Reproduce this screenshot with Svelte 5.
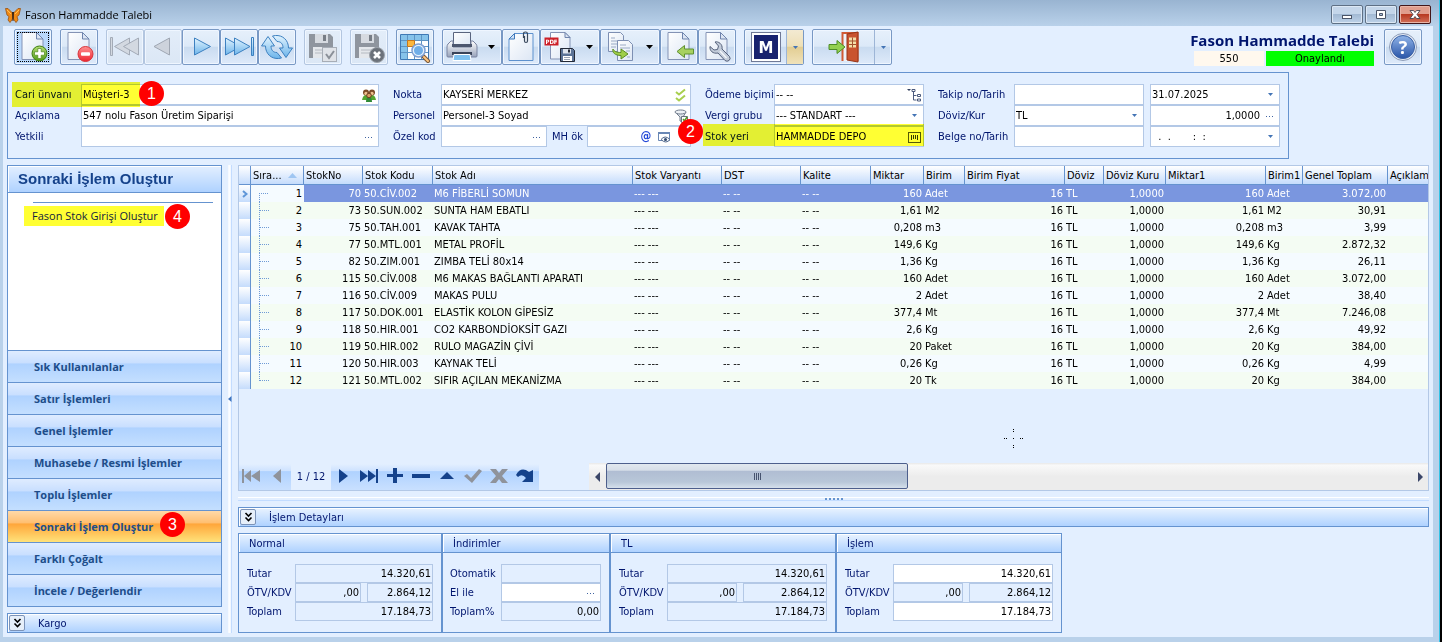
<script>
  const groups = [
    [{ icon: 'new', label: 'Yeni', focused: true }],
    [{ icon: 'delete', label: 'Sil' }],
    [
      { icon: 'first', label: 'İlk kayıt', disabled: true },
      { icon: 'prev', label: 'Önceki kayıt', disabled: true },
      { icon: 'next', label: 'Sonraki kayıt' },
      { icon: 'last', label: 'Son kayıt' },
      { icon: 'refresh', label: 'Yenile' }
    ],
    [{ icon: 'save', label: 'Kaydet', disabled: true }],
    [{ icon: 'cancel', label: 'Vazgeç', disabled: true }],
    [{ icon: 'search', label: 'Listele' }],
    [
      { icon: 'print', label: 'Yazdır', caret: true },
      { icon: 'note', label: 'Ekler' },
      { icon: 'pdf', label: 'PDF kaydet', caret: true },
      { icon: 'copy', label: 'Kopyala', caret: true },
      { icon: 'import', label: 'İçeri al' },
      { icon: 'tools', label: 'Ayarlar' }
    ],
    [{ icon: 'm', label: 'Modül', split: 'gold' }],
    [{ icon: 'exit', label: 'Çıkış', split: 'plain' }]
  ]

  const menu = [
    'Sık Kullanılanlar',
    'Satır İşlemleri',
    'Genel İşlemler',
    'Muhasebe / Resmi İşlemler',
    'Toplu İşlemler',
    'Sonraki İşlem Oluştur',
    'Farklı Çoğalt',
    'İncele / Değerlendir'
  ]

  const columns = [
    { title: 'Sıra...', cls: 'c-order', num: true },
    { title: 'StokNo', cls: 'c-no', num: true },
    { title: 'Stok Kodu', cls: 'c-code' },
    { title: 'Stok Adı', cls: 'c-name' },
    { title: 'Stok Varyantı', cls: 'c-variant' },
    { title: 'DST', cls: 'c-dst' },
    { title: 'Kalite', cls: 'c-quality' },
    { title: 'Miktar', cls: 'c-qty', num: true },
    { title: 'Birim', cls: 'c-unit' },
    { title: 'Birim Fiyat', cls: 'c-price', num: true },
    { title: 'Döviz', cls: 'c-cur' },
    { title: 'Döviz Kuru', cls: 'c-rate', num: true },
    { title: 'Miktar1', cls: 'c-price', num: true },
    { title: 'Birim1', cls: 'c-unit1' },
    { title: 'Genel Toplam', cls: 'c-total', num: true },
    { title: 'Açıklama', cls: '' }
  ]

  const items = [
    [70, '50.CİV.002', 'M6 FİBERLİ SOMUN', '160', 'Adet', 'Adet', '3.072,00'],
    [73, '50.SUN.002', 'SUNTA HAM EBATLI', '1,61', 'M2', 'M2', '30,91'],
    [75, '50.TAH.001', 'KAVAK TAHTA', '0,208', 'm3', 'm3', '3,99'],
    [77, '50.MTL.001', 'METAL PROFİL', '149,6', 'Kg', 'Kg', '2.872,32'],
    [82, '50.ZIM.001', 'ZIMBA TELİ 80x14', '1,36', 'Kg', 'Kg', '26,11'],
    [115, '50.CİV.008', 'M6 MAKAS BAĞLANTI APARATI', '160', 'Adet', 'Adet', '3.072,00'],
    [116, '50.CİV.009', 'MAKAS PULU', '2', 'Adet', 'Adet', '38,40'],
    [117, '50.DOK.001', 'ELASTİK KOLON GİPESİZ', '377,4', 'Mt', 'Mt', '7.246,08'],
    [118, '50.HIR.001', 'CO2 KARBONDİOKSİT GAZI', '2,6', 'Kg', 'Kg', '49,92'],
    [119, '50.HIR.002', 'RULO MAGAZİN ÇİVİ', '20', 'Paket', 'Kg', '384,00'],
    [120, '50.HIR.003', 'KAYNAK TELİ', '0,26', 'Kg', 'Kg', '4,99'],
    [121, '50.MTL.002', 'SIFIR AÇILAN MEKANİZMA', '20', 'Tk', 'Kg', '384,00']
  ]

  const rows = items.map(([no, code, name, qty, unit, unit1, total], i) => [
    i + 1, no, code, name, '--- ---', '-- --', '-- --', qty, unit, '16', 'TL', '1,0000', qty, unit1, total, ''
  ])

  const totals = [
    { id: 'normal', title: 'Normal' },
    { id: 'discount', title: 'İndirimler' },
    { id: 'tl', title: 'TL' },
    { id: 'process', title: 'İşlem', editable: true }
  ]

  const navigator = [
    { icon: 'first', label: 'İlk', off: true },
    { icon: 'prev', label: 'Önceki', off: true },
    { icon: 'count' },
    { icon: 'next', label: 'Sonraki' },
    { icon: 'last', label: 'Son' },
    { icon: 'add', label: 'Ekle' },
    { icon: 'remove', label: 'Çıkar' },
    { icon: 'edit', label: 'Düzenle' },
    { icon: 'post', label: 'Onayla', off: true },
    { icon: 'cancel', label: 'İptal', off: true },
    { icon: 'refresh', label: 'Tazele' }
  ]

  let activeMenu = 5
  let selected = 0
</script>

{#snippet page()}
  <path d="M5 1.500h14.500l6.500 6.500v20.500h-21z" fill="url(#paper)" stroke="#8493b5" />
  <path d="M19.500 1.500v6.500h6.500z" fill="#dce5f3" stroke="#6f84ad" />
{/snippet}

{#snippet floppy()}
  <path d="M2 3h21l3 3v21h-24z" fill="#8f959e" />
  <path d="M8 3h13v9h-13z" fill="#d6dae0" />
  <path d="M16 4h3v6h-3z" fill="#777d86" />
  <path d="M6 16h16v11h-16z" fill="#e4e7eb" />
  <path d="M8 19h12M8 22h12" stroke="#b5bac1" />
{/snippet}

{#snippet toolIcon(name)}
  <svg class="tool-icon" viewBox="0 0 32 32" aria-hidden="true">
    {#if name === 'new'}
      {@render page()}
      <circle cx="22.500" cy="22.500" r="7.500" fill="url(#green)" stroke="#3d7d12" />
      <path d="M20.800 17.500h3.400v3.300h3.300v3.400h-3.300v3.300h-3.400v-3.300h-3.300v-3.400h3.300z" fill="#fff" stroke="#4f8a1d" stroke-width=".7" />
    {:else if name === 'delete'}
      {@render page()}
      <circle cx="22.500" cy="23" r="7.500" fill="url(#red)" stroke="#d8343a" />
      <rect x="18" y="21.300" width="9" height="3.400" rx="1" fill="#fff" />
    {:else if name === 'first'}
      <g fill="#d3d9e1" stroke="#a3abb7">
        <path d="M1.500 6.500h2v18h-2z" />
        <path d="M20.500 7v17l-15-8.500z" />
        <path d="M29.500 7v17l-15-8.500z" />
      </g>
    {:else if name === 'prev'}
      <path d="M22.500 7v17l-15.500-8.500z" fill="#cdd3dc" stroke="#9fa7b3" />
    {:else if name === 'next'}
      <path d="M9.500 7v17l16-8.500z" fill="url(#sky)" stroke="#3c80c0" />
    {:else if name === 'last'}
      <g fill="url(#sky)" stroke="#3c80c0">
        <path d="M2.500 7v17l15.500-8.500z" />
        <path d="M11.500 7v17l15.500-8.500z" />
        <path d="M28.500 6.500h2v18h-2z" />
      </g>
    {:else if name === 'refresh'}
      <g fill="url(#sky)" stroke="#3c80c0" stroke-linejoin="round">
        <path d="M4.500 15c0 8 6 13 13 12.500l3-.5-4.500-5.500c-4 0-6-2.500-6-6.500h3.500l-6.500-9.500-6.500 9.500z" />
        <path d="M27.500 17c0-8-6-13-13-12.500l-3 .5 4.500 5.500c4 0 6 2.500 6 6.500h-3.500l6.500 9.500 6.500-9.500z" />
      </g>
    {:else if name === 'save'}
      {@render floppy()}
      <rect x="15.500" y="16.500" width="14" height="14" fill="#e0e3e8" stroke="#a7adb6" />
      <path d="M19 23l3 4 5-7" fill="none" stroke="#8b9098" stroke-width="2" />
    {:else if name === 'cancel'}
      {@render floppy()}
      <circle cx="24" cy="24" r="7.500" fill="#6c727a" stroke="#9ca2aa" />
      <path d="M21 21l6 6m0-6l-6 6" stroke="#fff" stroke-width="2.600" />
    {:else if name === 'search'}
      <path d="M1.500 3.500h28v25h-28z" fill="#fff" stroke="#3f79b5" />
      <path d="M2 4h27v5h-27zM2 9h6v19h-6z" fill="#86c3ea" />
      <path d="M2 9.500h27M2 15.500h27M2 21.500h27M8.500 4v24M15.500 4v24M22.500 4v24" stroke="#5e94c4" fill="none" />
      <path d="M8.500 9.500h7v6h-7z" fill="#fdb73e" stroke="#c9781c" />
      <path d="M24 25l5 5" stroke="#7b5a3a" stroke-width="4" stroke-linecap="round" />
      <path d="M25 26l4 4" stroke="#ffc680" stroke-width="2" stroke-linecap="round" />
      <circle cx="19.500" cy="19.500" r="6.500" fill="#e4f2fd" stroke="#7f9fd2" stroke-width="1.500" />
      <circle cx="19.500" cy="19.500" r="4.500" fill="#70aee8" />
    {:else if name === 'print'}
      <path d="M7.500 1.500h17v13h-17z" fill="url(#paper)" stroke="#59647e" />
      <path d="M2 13l3-3h2v6h18v-6h2l3 3q1 1 1 3v9q0 1-1 1h-28q-1 0-1-1v-9q0-2 1-3z" fill="url(#steel)" stroke="#7983a0" />
      <path d="M6 13h20v3h-20z" fill="#4c566e" />
      <path d="M6 21h20v3h-20z" fill="#3a445a" />
      <path d="M8 23.500h16l1 6h-18z" fill="#7fc1f0" stroke="#fff" />
    {:else if name === 'note'}
      <path d="M9.500 2.500h18.500v27h-24v-21.500z" fill="url(#paper)" stroke="#5d91ce" />
      <path d="M9.500 2.500v5.500h-5.500z" fill="#cfe1f6" stroke="#3f78bb" />
      <path d="M18.500 7v-4q0-2 2-2t2 2v7q0 1.500-1.500 1.500t-1.500-1.500v-5" fill="none" stroke="#39485c" stroke-width="1.200" />
    {:else if name === 'pdf'}
      <path d="M6.500 1.500h14.500l5 5v21.500h-19.500z" fill="url(#paper)" stroke="#8493b5" />
      <path d="M21 1.500v5h5z" fill="#dce5f3" stroke="#6f84ad" />
      <rect x=".500" y="6.500" width="14" height="8" fill="#cd2028" />
      <text x="7.500" y="13" class="pdf-text">PDF</text>
      <path d="M16.500 17.500h12l2 2v11h-14z" fill="#5c7396" stroke="#232936" />
      <path d="M19 18h8v4.500h-8z" fill="#dfe5ee" />
      <path d="M24 18.500h2v3h-2z" fill="#232936" />
      <path d="M19 25h9v5h-9z" fill="#fff" />
      <path d="M20 26.500h6M20 28.500h6" stroke="#9aa3b3" />
    {:else if name === 'copy'}
      <path d="M4.500 1.500h12l3 3v16h-15z" fill="url(#paper)" stroke="#7d8fb3" />
      <path d="M7 7h4M7 10h8M7 13h8M7 16h5" stroke="#9babc6" />
      <path d="M13.500 9.500h11l4 4v16h-15z" fill="url(#paper)" stroke="#7d8fb3" />
      <path d="M16 14h6M16 17h10M22 20h4M23 26h3" stroke="#9babc6" />
      <path d="M9 18c1 2 3 3.500 8 3.500v-3.500l7 5-7 5v-3.500c-6 0-9-3-8-6.500z" fill="#9fce48" stroke="#5b8c24" />
    {:else if name === 'import'}
      {@render page()}
      <path d="M14 20.500l7.500-6v3.500h9v5h-9v3.500z" fill="#a7d160" stroke="#5f9030" />
    {:else if name === 'tools'}
      {@render page()}
      <path d="M14 11c3-1 8 2 7 7l7.500 7.500q1.500 2.500-.5 4t-4 0l-7-7.500c-5 1-8.500-2-8-6.500l4 3.500 3.500-.5 1-3.500z" fill="#c3ccda" stroke="#56627c" stroke-linejoin="round" />
      <path d="M19 20l6.500 7" stroke="#f2f5f9" stroke-width="1.500" />
    {:else if name === 'm'}
      <rect x="1.500" y="1.500" width="29" height="29" fill="#fff" stroke="#6f7996" />
      <rect x="4" y="4" width="24" height="24" fill="#18226e" />
      <text x="16" y="21.500" class="m-text">M</text>
    {:else if name === 'exit'}
      <path d="M14.500 30v-28h15v28" fill="#eef2f8" stroke="#d05a35" stroke-width="2" />
      <path d="M19 3l11-2v30l-11-2z" fill="#c9532f" stroke="#973518" />
      <path d="M21 6.500h7v10h-7z" fill="#f5dfa9" />
      <path d="M24.500 6.500v10M21 10h7M21 13.500h7" stroke="#a2512f" />
      <path d="M1 13.500h8v-4l8 6.500-8 6.500v-4h-8z" fill="#92d050" stroke="#4c8c27" />
    {/if}
  </svg>
{/snippet}

{#snippet arrow()}
  <svg class="arrow" viewBox="0 0 7 4" aria-hidden="true"><path d="M0 0h7l-3.500 4z" /></svg>
{/snippet}

{#snippet fieldIcon(name)}
  <button class="field-button" type="button" aria-label={name}>
    {#if name === 'dots'}
      <svg viewBox="0 0 14 14" aria-hidden="true"><path d="M3 7.500h1M6 7.500h1M9 7.500h1" stroke="#3f62a0" /></svg>
    {:else if name === 'people'}
      <svg viewBox="0 0 14 14" aria-hidden="true">
        <path d="M0 12q1-5 4-5t4 5zM6 12q1-5 4-5t4 5z" fill="#55a630" />
        <circle cx="4" cy="4.500" r="3" fill="#7b4a26" />
        <circle cx="10" cy="4.500" r="3" fill="#7b4a26" />
        <circle cx="4" cy="5.500" r="1.700" fill="#efc08e" />
        <circle cx="10" cy="5.500" r="1.700" fill="#efc08e" />
        <path d="M4 14q0-5 3-5t3 5z" fill="#2f8a36" />
        <circle cx="7" cy="7.500" r="2.300" fill="#d99b62" stroke="#6a3d1f" />
      </svg>
    {:else if name === 'checks'}
      <svg viewBox="0 0 14 14" aria-hidden="true">
        <path d="M2 4l3 2.500 6-5M2 10l3 2.500 6-5" fill="none" stroke="#a8cf4e" stroke-width="2" />
      </svg>
    {:else if name === 'filter'}
      <svg viewBox="0 0 14 14" aria-hidden="true">
        <path d="M1 3l5 5v4l3 1v-5l3-5z" fill="#dfe5ec" stroke="#717c8c" />
        <ellipse cx="6.500" cy="3" rx="5.500" ry="2" fill="#eef2f6" stroke="#717c8c" />
        <path d="M7.500 7.500h6v6h-6z" fill="#fff" stroke="#68737f" />
        <path d="M9 10l1.500 2 2.500-4" fill="none" stroke="#5a9d23" stroke-width="1.500" />
      </svg>
    {:else if name === 'tree'}
      <svg viewBox="0 0 14 14" aria-hidden="true">
        <path d="M0 1h4l-2 2z" fill="#33415f" />
        <path d="M6.500 4v8h3M6.500 7.500h3" fill="none" stroke="#4b5a7d" />
        <path d="M5 1.500h3v2h-3zM10.500 6.500h3v2h-3zM10.500 11h3v2h-3z" fill="#fff" stroke="#4b5a7d" />
      </svg>
    {:else if name === 'barcode'}
      <svg viewBox="0 0 14 14" aria-hidden="true">
        <rect x="1.500" y="2.500" width="12" height="10" fill="none" stroke="#555a1a" />
        <path d="M4.500 5v5M6.500 5v4M8.500 5v4M10.500 5v5" stroke="#33380f" />
      </svg>
    {:else if name === 'window'}
      <svg viewBox="0 0 14 14" aria-hidden="true">
        <path d="M1.500 2.500h11v8h-11z" fill="#fff" stroke="#6987b5" />
        <path d="M1 2h12v2h-12z" fill="#6987b5" />
        <path d="M4 9.500q4-5 9 0q-4 5-9 0z" fill="#eef3f9" stroke="#566b8e" />
        <circle cx="8.500" cy="9.500" r="1.500" fill="#33486c" />
      </svg>
    {:else}
      {@render arrow()}
    {/if}
  </button>
{/snippet}

{#snippet navIcon(name)}
  <svg viewBox="0 0 20 20" aria-hidden="true">
    {#if name === 'first'}
      <path d="M1 3h2v14h-2zM10 4v12l-7-6zM19 4v12l-9-6z" />
    {:else if name === 'prev'}
      <path d="M14 3v14l-8-7z" />
    {:else if name === 'next'}
      <path d="M6 3v14l9-7z" />
    {:else if name === 'last'}
      <path d="M17 3h2v14h-2zM1 4v12l8-6zM9 4v12l8-6z" />
    {:else if name === 'add'}
      <path d="M8 2h4v6h6v3h-6v6h-4v-6h-6v-3h6z" />
    {:else if name === 'remove'}
      <path d="M1 8h18v4h-18z" />
    {:else if name === 'edit'}
      <path d="M3 13h14l-7-7z" />
    {:else if name === 'post'}
      <path d="M1 10l3-2 4 4 8-9 3 2-10 12z" />
    {:else if name === 'cancel'}
      <path d="M1 3h6l3 4 3-4h6l-6 7 6 7h-6l-3-4-3 4h-6l6-7z" />
    {:else if name === 'refresh'}
      <path d="M1 9q5-9 13-3l4-2v12h-11l4-4q-4-5-8-1z" />
    {/if}
  </svg>
{/snippet}

{#snippet chevrons()}
  <button class="expand" aria-label="Genişlet">
    <svg viewBox="0 0 9 10" aria-hidden="true">
      <path d="M1.500 1l3 3 3-3M1.500 5.500l3 3 3-3" fill="none" stroke="#000" stroke-width="1.600" />
    </svg>
  </button>
{/snippet}

<svg class="defs" aria-hidden="true">
  <defs>
    <linearGradient id="paper" x1="0" y1="0" x2="1" y2="1">
      <stop offset="0" stop-color="#fff" /><stop offset="1" stop-color="#dce6f4" />
    </linearGradient>
    <linearGradient id="green" x1="0" y1="0" x2="0" y2="1">
      <stop offset="0" stop-color="#b5de74" /><stop offset="1" stop-color="#4f9a17" />
    </linearGradient>
    <linearGradient id="red" x1="0" y1="0" x2="0" y2="1">
      <stop offset="0" stop-color="#ff9090" /><stop offset="1" stop-color="#ee2430" />
    </linearGradient>
    <linearGradient id="sky" x1="0" y1="0" x2="0" y2="1">
      <stop offset="0" stop-color="#e2f4ff" /><stop offset="1" stop-color="#6cb4ea" />
    </linearGradient>
    <linearGradient id="steel" x1="0" y1="0" x2="0" y2="1">
      <stop offset="0" stop-color="#fff" /><stop offset="1" stop-color="#98a3bb" />
    </linearGradient>
    <linearGradient id="help" x1="0" y1="0" x2="0" y2="1">
      <stop offset="0" stop-color="#90b4e8" /><stop offset="1" stop-color="#2a55a8" />
    </linearGradient>
  </defs>
</svg>

<div class="window">
  <header class="titlebar">
    <svg class="logo" viewBox="0 0 16 16" aria-hidden="true">
      <path d="M7.500 6L3 1.500H.5L2 8l2 1.500L3 13l2 2.500L7.500 12z" fill="#f08a16" stroke="#9a5210" stroke-width=".8" />
      <path d="M8.500 6L13 1.500h2.500L14 8l-2 1.500 1 3.500-2 2.500L8.500 12z" fill="#f08a16" stroke="#9a5210" stroke-width=".8" />
      <path d="M2 3l4 4M14 3l-4 4" stroke="#ffc257" />
      <path d="M7 5h2l-.5 9h-1z" fill="#3b2512" />
    </svg>
    <h1>Fason Hammadde Talebi</h1>
    <div class="window-buttons">
      <button aria-label="Küçült">
        <svg viewBox="0 0 12 12" aria-hidden="true"><rect x="1.500" y="6.500" width="9" height="3" fill="#fff" stroke="#4b5568" /></svg>
      </button>
      <button aria-label="Büyüt">
        <svg viewBox="0 0 12 12" aria-hidden="true">
          <path d="M1.500 1.500h9v8h-9z" fill="#fff" stroke="#4b5568" /><path d="M4.500 4.500h3v2h-3z" fill="#a8bdd8" stroke="#4b5568" />
        </svg>
      </button>
      <button class="close" aria-label="Kapat">
        <svg viewBox="0 0 12 12" aria-hidden="true">
          <path d="M1 1.500h3.500l1.500 2 1.500-2h3.500l-3 4 3 4h-3.500l-1.500-2-1.500 2h-3.500l3-4z" fill="#fff" stroke="#4b4550" stroke-width=".9" />
        </svg>
      </button>
    </div>
  </header>

  <main class="content">
    <div class="toolbar">
      {#each groups as group}
        <div class="tool-group">
          {#each group as tool}
            <button class="tool" class:focused={tool.focused} class:wide={tool.caret || tool.split === 'gold'} class:wider={tool.split === 'plain'} class:split={tool.split} disabled={tool.disabled} aria-label={tool.label}>
              <span class="tool-main">{@render toolIcon(tool.icon)}</span>
              {#if tool.caret}
                <span class="caret">{@render arrow()}</span>
              {/if}
              {#if tool.split}
                <span class="drop {tool.split}">{@render arrow()}</span>
              {/if}
            </button>
          {/each}
        </div>
      {/each}
      <div class="status">
        <h2>Fason Hammadde Talebi</h2>
        <div class="status-row">
          <span class="doc-no">550</span>
          <span class="approved">Onaylandı</span>
        </div>
      </div>
      <button class="tool" aria-label="Yardım">
        <svg class="tool-icon" viewBox="0 0 32 32" aria-hidden="true">
          <circle cx="16" cy="16" r="13.500" fill="#e7edf6" stroke="#8d9cb8" />
          <circle cx="16" cy="16" r="11.500" fill="url(#help)" stroke="#3b61a5" />
          <text x="16" y="22.500" class="help-text">?</text>
        </svg>
      </button>
    </div>

    <form class="form">
      <label for="cari">Cari ünvanı</label>
      <div class="field"><input id="cari" value="Müşteri-3" />{@render fieldIcon('people')}</div>
      <label for="nokta">Nokta</label>
      <div class="field"><input id="nokta" value="KAYSERİ MERKEZ" />{@render fieldIcon('checks')}</div>
      <label for="odeme">Ödeme biçimi</label>
      <div class="field"><input id="odeme" value="-- --" />{@render fieldIcon('tree')}</div>
      <label for="takip">Takip no/Tarih</label>
      <div class="field"><input id="takip" /></div>
      <div class="field last"><input aria-label="Tarih" value="31.07.2025" />{@render fieldIcon('arrow')}</div>

      <label for="aciklama">Açıklama</label>
      <div class="field"><input id="aciklama" value="547 nolu Fason Üretim Siparişi" /></div>
      <label for="personel">Personel</label>
      <div class="field"><input id="personel" value="Personel-3 Soyad" />{@render fieldIcon('filter')}</div>
      <label for="vergi">Vergi grubu</label>
      <div class="field">
        <select id="vergi"><option>--- STANDART ---</option></select>
        <span class="select-arrow">{@render arrow()}</span>
      </div>
      <label for="doviz">Döviz/Kur</label>
      <div class="field">
        <select id="doviz"><option>TL</option></select>
        <span class="select-arrow">{@render arrow()}</span>
      </div>
      <div class="field last"><input class="right" aria-label="Kur" value="1,0000" />{@render fieldIcon('dots')}</div>

      <label for="yetkili">Yetkili</label>
      <div class="field"><input id="yetkili" />{@render fieldIcon('dots')}</div>
      <label for="ozel">Özel kod</label>
      <div class="pair">
        <div class="field"><input id="ozel" />{@render fieldIcon('dots')}</div>
        <label for="mhok">MH ök</label>
        <div class="field mh">
          <input id="mhok" />
          <button class="field-button at" type="button">@</button>
          {@render fieldIcon('window')}
        </div>
      </div>
      <label for="stok">Stok yeri</label>
      <div class="field"><input id="stok" value="HAMMADDE DEPO" />{@render fieldIcon('barcode')}</div>
      <label for="belge">Belge no/Tarih</label>
      <div class="field"><input id="belge" /></div>
      <div class="field last"><input aria-label="Belge tarihi" value="  .  .       :  :" />{@render fieldIcon('arrow')}</div>

      <span class="mark mark-customer"></span>
      <span class="mark mark-store"></span>
      <span class="step step-1">1</span>
      <span class="step step-2">2</span>
    </form>

    <div class="workspace">
      <aside>
        <nav class="side">
          <h3>Sonraki İşlem Oluştur</h3>
          <div class="side-list">
            <a href="#stok-girisi">Fason Stok Girişi Oluştur</a>
            <span class="step step-4">4</span>
          </div>
          {#each menu as entry, i}
            <button class="side-item" class:active={i === activeMenu} on:click={() => (activeMenu = i)}>
              {entry}
              {#if i === 5}
                <span class="step step-3">3</span>
              {/if}
            </button>
          {/each}
        </nav>
        <div class="bar">{@render chevrons()}Kargo</div>
      </aside>

      <div class="splitter">
        <svg viewBox="0 0 4 6" aria-hidden="true"><path d="M3.500 0v6l-3.500-3z" fill="#3f74bd" /></svg>
      </div>

      <div class="details">
        <section class="grid">
          <table>
            <colgroup>
              <col class="c-mark" />
              {#each columns as col}
                <col class={col.cls} />
              {/each}
            </colgroup>
            <thead>
              <tr>
                <th></th>
                {#each columns as col, i}
                  <th>
                    {col.title}
                    {#if i === 0}
                      <svg class="sort" viewBox="0 0 9 5" aria-hidden="true"><path d="M0 5h9l-4.500-5z" fill="#9fc6f2" /></svg>
                    {/if}
                  </th>
                {/each}
              </tr>
            </thead>
            <tbody>
              {#each rows as row, r}
                <tr class:selected={r === selected} on:click={() => (selected = r)}>
                  <td class="marker">
                    {#if r === selected}
                      <svg viewBox="0 0 6 8" aria-hidden="true"><path d="M1 1l3.500 3-3.500 3" fill="none" stroke="#5f96d8" stroke-width="2" /></svg>
                    {/if}
                  </td>
                  {#each row as cell, c}
                    <td class:num={columns[c].num} class:order={c === 0}>{cell}</td>
                  {/each}
                </tr>
              {/each}
            </tbody>
          </table>

          <svg class="crosshair" viewBox="0 0 20 20" aria-hidden="true">
            <path d="M9 0h1v1h-1zM9 2h1v1h-1zM9 9h1v1h-1zM9 16h1v1h-1zM9 18h1v1h-1zM0 9h1v1h-1zM2 9h1v1h-1zM16 9h1v1h-1zM18 9h1v1h-1z" />
          </svg>

          <div class="grid-footer">
            <div class="navigator">
              {#each navigator as item}
                {#if item.icon === 'count'}
                  <span class="count">{selected + 1} / {rows.length}</span>
                {:else}
                  <button class:off={item.off} aria-label={item.label}>{@render navIcon(item.icon)}</button>
                {/if}
              {/each}
            </div>
            <div class="scrollbar">
              <button aria-label="Sola kaydır"><svg viewBox="0 0 6 10" aria-hidden="true"><path d="M5 0v10l-5-5z" /></svg></button>
              <div class="track"><div class="thumb"><i></i><i></i><i></i><i></i></div></div>
              <button aria-label="Sağa kaydır"><svg viewBox="0 0 6 10" aria-hidden="true"><path d="M1 0v10l5-5z" /></svg></button>
            </div>
          </div>
        </section>

        <div class="hsplitter"><i></i><i></i><i></i><i></i><i></i></div>

        <div class="bar">{@render chevrons()}İşlem Detayları</div>

        <div class="totals">
          {#each totals as box}
            <section class="total {box.id}">
              <h4>{box.title}</h4>
              <div class="total-rows">
                {#if box.id === 'discount'}
                  <label for="otomatik">Otomatik</label>
                  <div class="field readonly"><input id="otomatik" readonly /></div>
                  <label for="elile">El ile</label>
                  <div class="field"><input id="elile" />{@render fieldIcon('dots')}</div>
                  <label for="toplamyuzde">Toplam%</label>
                  <div class="field readonly"><input id="toplamyuzde" class="right" readonly value="0,00" /></div>
                {:else}
                  <label for="{box.id}-tutar">Tutar</label>
                  <div class="field" class:readonly={!box.editable}>
                    <input id="{box.id}-tutar" class="right" readonly={!box.editable} value="14.320,61" />
                  </div>
                  <label for="{box.id}-otv">ÖTV/KDV</label>
                  <div class="tax">
                    <div class="field readonly"><input id="{box.id}-otv" class="right" readonly value=",00" /></div>
                    <div class="field readonly"><input aria-label="KDV" class="right" readonly value="2.864,12" /></div>
                  </div>
                  <label for="{box.id}-toplam">Toplam</label>
                  <div class="field" class:readonly={!box.editable}>
                    <input id="{box.id}-toplam" class="right" readonly={!box.editable} value="17.184,73" />
                  </div>
                {/if}
              </div>
            </section>
          {/each}
        </div>
      </div>
    </div>
  </main>
</div>

<style>
  :global(body) {
    margin: 0;
    background: #b9d1ea;
  }

  * {
    box-sizing: border-box;
  }

  .defs {
    position: absolute;
    width: 0;
    height: 0;
  }

  .window {
    display: flex;
    flex-direction: column;
    min-height: 100vh;
    padding: 0 7px 5px 3px;
    border-right: 2px solid #000;
    box-shadow: inset -1px 0 #35c3e6;
    background: #b9d1ea;
    color: #00156e;
    font-family: 'DejaVu Sans Condensed', Tahoma, sans-serif;
    font-size: 11px;
    line-height: 13px;
  }

  button,
  input,
  select {
    font: inherit;
    color: inherit;
    margin: 0;
    padding: 0;
    border: none;
    background: none;
  }

  h1,
  h2,
  h3,
  h4 {
    margin: 0;
    font-weight: normal;
  }

  svg {
    display: block;
    flex: none;
  }

  .titlebar {
    display: flex;
    align-items: center;
    gap: 4px;
    height: 26px;
    margin: 0 -6px 0 -3px;
    padding: 3px 8px 0 5px;
    background: linear-gradient(#99b4d1, #b9d1ea);
  }

  .logo {
    width: 16px;
    height: 16px;
  }

  h1 {
    color: #000;
    font-family: 'Open Sans', 'Segoe UI', sans-serif;
    font-size: 11px;
    line-height: 16px;
  }

  .window-buttons {
    display: flex;
    gap: 2px;
    margin-left: auto;
  }

  .window-buttons button {
    display: flex;
    align-items: center;
    justify-content: center;
    width: 32px;
    height: 19px;
    border: 1px solid #5e7085;
    border-radius: 2px;
    background: linear-gradient(#c4d6ea 50%, #a3bad4 50%, #bdd2e9);
    box-shadow: inset 0 0 0 1px #dce8f5;
  }

  .window-buttons .close {
    border-color: #43161a;
    background: linear-gradient(#e09d8d 45%, #b83a22 50%, #d2705a);
    box-shadow: inset 0 0 0 1px #e9b5a8;
  }

  .window-buttons svg {
    width: 12px;
    height: 12px;
  }

  .content {
    display: flex;
    flex-direction: column;
    flex: 1;
    padding: 3px 4px 4px;
    background: #e3efff;
  }

  .toolbar {
    display: flex;
    gap: 8px;
    height: 36px;
    margin-bottom: 7px;
    padding: 0 7px;
  }

  .tool-group {
    display: flex;
  }

  .tool {
    display: flex;
    width: 38px;
    height: 36px;
    border: 1px solid #7898c4;
    border-radius: 2px;
    background: linear-gradient(#e6f0fb, #dce9f8 48%, #c9dbf0 50%, #deeafa);
    box-shadow: inset 0 0 0 1px #eff6ff;
  }

  .tool.wide {
    width: 60px;
  }

  .tool.wider {
    width: 80px;
  }

  .tool:disabled {
    border-color: #b3c6e0;
    background: linear-gradient(#e3edf9, #dbe7f5);
  }

  .tool.focused {
    background: #b9d8fb;
    outline: 1px dotted #000;
    outline-offset: -4px;
  }

  .tool-main {
    display: flex;
    flex: 1;
    align-items: center;
    justify-content: center;
    height: 100%;
  }

  .tool-icon {
    width: 32px;
    height: 32px;
    margin: auto;
  }

  .caret,
  .drop {
    display: flex;
    align-items: center;
    justify-content: center;
    height: 100%;
  }

  .caret {
    width: 20px;
    color: #000;
  }

  .drop {
    width: 17px;
    border-left: 1px solid #9db5d6;
    color: #4374b5;
  }

  .drop .arrow {
    width: 5px;
    height: 3px;
  }

  .drop.gold {
    background: linear-gradient(#f3ead2, #eee0b7 48%, #e2cd92 50%, #f0e2ba);
  }

  .arrow {
    width: 7px;
    height: 4px;
    fill: currentColor;
  }

  .pdf-text {
    fill: #fff;
    font-family: 'DejaVu Sans Condensed', sans-serif;
    font-size: 6px;
    font-weight: bold;
    text-anchor: middle;
  }

  .m-text {
    fill: #fff;
    font-family: 'DejaVu Sans', sans-serif;
    font-size: 15px;
    font-weight: bold;
    text-anchor: middle;
  }

  .help-text {
    fill: #fff;
    font-family: 'Open Sans', sans-serif;
    font-size: 18px;
    font-weight: bold;
    text-anchor: middle;
  }

  .status {
    display: flex;
    flex-direction: column;
    align-items: flex-end;
    margin-left: auto;
    padding-right: 2px;
  }

  h2 {
    font-family: 'Open Sans', 'Segoe UI', sans-serif;
    font-size: 15px;
    font-weight: bold;
    line-height: 22px;
    white-space: nowrap;
  }

  .status-row {
    display: flex;
    gap: 2px;
    color: #000;
    line-height: 15px;
    text-align: center;
  }

  .doc-no {
    width: 70px;
    background: #fff8ee;
  }

  .approved {
    width: 108px;
    background: #0f0;
  }

  .form {
    position: relative;
    display: grid;
    grid-template-columns: 66px 298fr 62px 250fr 83px 150fr 90px 130fr 136fr;
    grid-auto-rows: 21px;
    max-width: 1282px;
    padding: 11px 8px 11px 7px;
    border: 1px solid #6593cf;
  }

  .form label {
    align-self: center;
    padding-left: 14px;
    white-space: nowrap;
  }

  .form > label:nth-child(9n + 1) {
    padding-left: 0;
  }

  .field {
    display: flex;
    align-items: center;
    min-width: 0;
    border: 1px solid #b3c8e6;
    background: #fff;
    color: #000;
  }

  .field.last {
    margin-left: 6px;
  }

  .field.readonly {
    background: #e3efff;
  }

  .field input,
  .field select {
    flex: 1;
    width: 0;
    min-width: 0;
    height: 100%;
    padding-left: 1px;
    outline: none;
    appearance: none;
  }

  .field input.right {
    padding-right: 1px;
    text-align: right;
  }

  .field-button {
    display: flex;
    align-items: center;
    justify-content: center;
    width: 18px;
    height: 100%;
    color: #4374b5;
  }

  .field-button svg:not(.arrow) {
    width: 14px;
    height: 14px;
  }

  .field-button .arrow,
  .select-arrow .arrow {
    width: 5px;
    height: 3px;
  }

  .field-button.at {
    color: #2348d8;
    font-size: 12px;
    font-weight: bold;
  }

  .select-arrow {
    display: flex;
    justify-content: center;
    width: 18px;
    margin-left: -18px;
    color: #4374b5;
    pointer-events: none;
  }

  .pair {
    display: grid;
    grid-template-columns: 106fr 40px 104fr;
  }

  .form .pair label {
    padding-left: 5px;
  }

  .field.mh {
    padding-right: 17px;
  }

  .mark {
    position: absolute;
    background: #ffff33;
    mix-blend-mode: multiply;
    pointer-events: none;
  }

  .mark-customer {
    left: 4px;
    top: 9px;
    width: 128px;
    height: 25px;
  }

  .mark-store {
    left: 695px;
    top: 51px;
    width: 221px;
    height: 22px;
  }

  .step {
    position: absolute;
    width: 25px;
    height: 25px;
    border-radius: 50%;
    background: #f00;
    color: #fff;
    font-family: 'Liberation Sans', Arial, sans-serif;
    font-size: 16px;
    font-weight: normal;
    line-height: 25px;
    text-align: center;
  }

  .step-1 {
    left: 131px;
    top: 8px;
  }

  .step-2 {
    left: 670px;
    top: 46px;
  }

  .step-3 {
    left: 152px;
    top: 1px;
  }

  .step-4 {
    left: 157px;
    top: 11px;
  }

  .workspace {
    display: flex;
    flex: 1;
    gap: 6px;
    margin-top: 6px;
  }

  aside {
    display: flex;
    flex-direction: column;
    gap: 6px;
    width: 215px;
    flex: none;
  }

  .side {
    display: flex;
    flex-direction: column;
    flex: 1;
    border: 1px solid #6593cf;
    background: #fff;
  }

  h3 {
    height: 27px;
    padding-left: 10px;
    border-bottom: 1px solid #6593cf;
    background: linear-gradient(#e3efff, #afd2ff);
    box-shadow: inset 1px 1px #fff;
    color: #15428b;
    font-family: 'Liberation Sans', Arial, sans-serif;
    font-size: 15px;
    font-weight: bold;
    line-height: 26px;
  }

  .side-list {
    position: relative;
    flex: 1;
    padding: 9px 8px 0 16px;
  }

  .side-list::before {
    content: '';
    display: block;
    height: 3px;
    margin-left: 9px;
    border-top: 1px solid #6593cf;
  }

  .side-list a {
    display: inline-block;
    padding: 0 6px 0 8px;
    background: #ffff33;
    color: #111c3d;
    font-family: 'Open Sans', 'Segoe UI', sans-serif;
    font-size: 11px;
    line-height: 20px;
    text-decoration: none;
  }

  .side-item {
    position: relative;
    height: 32px;
    padding-left: 26px;
    border-top: 1px solid #6593cf;
    background: linear-gradient(#dfecff, #c9dfff 38%, #afd2ff 42%, #c4dfff);
    color: #204d89;
    font-family: 'Open Sans', 'Segoe UI', sans-serif;
    font-size: 11px;
    font-weight: bold;
    text-align: left;
  }

  .side-item.active {
    background: linear-gradient(#ffd9a8, #ffbf71 38%, #ffa63a 42%, #ffe27a);
  }

  .bar {
    display: flex;
    align-items: center;
    gap: 13px;
    height: 20px;
    padding-left: 1px;
    border: 1px solid #6593cf;
    background: linear-gradient(#e9f3ff, #afd2ff);
    box-shadow: inset 1px 1px #fff;
  }

  .expand {
    display: flex;
    align-items: center;
    justify-content: center;
    width: 16px;
    height: 16px;
    border: 1px solid #7c93b8;
    border-radius: 2px;
    background: #e6effa;
  }

  .expand svg {
    width: 9px;
    height: 10px;
  }

  .splitter {
    display: flex;
    align-items: center;
    width: 4px;
    border-right: 1px solid #c3dcff;
    background: linear-gradient(90deg, #f3f8ff, #fff 70%, #e3efff);
  }

  .splitter svg {
    width: 4px;
    height: 6px;
  }

  .details {
    display: flex;
    flex-direction: column;
    flex: 1;
    min-width: 0;
  }

  .grid {
    position: relative;
    display: flex;
    flex-direction: column;
    flex: 1;
    justify-content: space-between;
    overflow: hidden;
    border: 1px solid #b3c8e6;
  }

  table {
    width: 100%;
    border-collapse: separate;
    border-spacing: 0;
    table-layout: fixed;
    color: #000;
  }

  .c-mark { width: 12px; }
  .c-order { width: 53px; }
  .c-no { width: 59px; }
  .c-code { width: 70px; }
  .c-name { width: 200px; }
  .c-variant { width: 89px; }
  .c-dst { width: 79px; }
  .c-quality { width: 70px; }
  .c-qty { width: 53px; }
  .c-unit { width: 41px; }
  .c-price { width: 100px; }
  .c-cur { width: 39px; }
  .c-rate { width: 62px; }
  .c-unit1 { width: 37px; }
  .c-total { width: 85px; }

  th {
    position: relative;
    height: 19px;
    padding: 0 0 0 2px;
    overflow: hidden;
    border-right: 1px solid #6593cf;
    border-bottom: 1px solid #6593cf;
    background: linear-gradient(#fff, #c5dcfc);
    font-weight: normal;
    text-align: left;
    white-space: nowrap;
  }

  th:last-child {
    border-right: none;
  }

  .sort {
    position: absolute;
    right: 6px;
    top: 7px;
    width: 9px;
    height: 5px;
  }

  td {
    height: 17px;
    padding: 0 1px;
    background: #f5fbff;
    white-space: nowrap;
  }

  tr:nth-child(even) td {
    background: #f4fcf3;
  }

  tr.selected td {
    background: #7a96df;
    color: #fff;
  }

  tbody tr td.marker {
    padding-left: 3px;
    border-right: 1px solid #6593cf;
    background: linear-gradient(#fff, #c5dcfc);
  }

  .marker svg {
    width: 6px;
    height: 8px;
  }

  td.num {
    padding-right: 2px;
    text-align: right;
  }

  tr.selected td.order {
    background: #f5fbff;
    color: #000;
  }

  td.order {
    position: relative;
  }

  td.order::before {
    content: '';
    position: absolute;
    left: 8px;
    top: 0;
    width: 9px;
    height: 8px;
    border-bottom: 1px dotted #6f9bd6;
    border-left: 1px dotted #6f9bd6;
  }

  td.order::after {
    content: '';
    position: absolute;
    left: 8px;
    top: 8px;
    height: 9px;
    border-left: 1px dotted #6f9bd6;
  }

  tr:first-child td.order::before {
    border-left: none;
  }

  tr:last-child td.order::after {
    border-left: none;
  }

  .crosshair {
    position: absolute;
    left: 765px;
    top: 263px;
    width: 20px;
    height: 20px;
  }

  .grid-footer {
    display: flex;
    gap: 50px;
    height: 27px;
  }

  .navigator {
    display: flex;
    align-items: stretch;
  }

  .navigator button {
    display: flex;
    align-items: center;
    justify-content: center;
    width: 26px;
    padding: 0 2px 2px 0;
    background: linear-gradient(#e3efff 4%, #cfe3ff 28%, #afd2ff 32%, #c9e0ff);
    fill: #15428b;
  }

  .navigator button.off {
    fill: #8f939b;
  }

  .navigator svg {
    width: 20px;
    height: 20px;
  }

  .count {
    width: 40px;
    line-height: 28px;
    text-align: center;
  }

  .scrollbar {
    display: flex;
    flex: 1;
    background: linear-gradient(#e8e8e8, #f9f9f9 8%, #ececec 50%);
  }

  .scrollbar button {
    display: flex;
    align-items: center;
    justify-content: center;
    width: 17px;
    fill: #3b4668;
  }

  .scrollbar svg {
    width: 6px;
    height: 10px;
  }

  .track {
    flex: 1;
  }

  .thumb {
    display: flex;
    align-items: center;
    justify-content: center;
    gap: 1px;
    width: 37%;
    min-width: 302px;
    height: 26px;
    border: 1px solid #4d5f8c;
    border-radius: 2px;
    background: linear-gradient(#e2e8ef, #d6dee8 26%, #b0bdd3 30%, #b8c7d8 75%, #d5e0eb);
  }

  .thumb i {
    width: 1px;
    height: 7px;
    background: #46536f;
  }

  .hsplitter {
    display: flex;
    justify-content: center;
    gap: 2px;
    height: 4px;
    margin: 6px 0;
    padding-top: 1px;
    border-bottom: 1px solid #c3dcff;
    background: linear-gradient(#fff 50%, #e3efff 50%);
  }

  .hsplitter i {
    width: 2px;
    height: 2px;
    background: #6593cf;
  }

  .totals {
    display: grid;
    grid-template-columns: 204fr 168fr 226fr 226fr;
    max-width: 824px;
    margin-top: 6px;
  }

  .total {
    height: 100px;
    border: 1px solid #6593cf;
  }

  h4 {
    height: 19px;
    padding-left: 10px;
    border-bottom: 1px solid #6593cf;
    background: linear-gradient(#e9f3ff, #afd2ff);
    box-shadow: inset 1px 1px #fff;
    font-size: 11px;
    line-height: 19px;
  }

  .total-rows {
    display: grid;
    grid-template-columns: 48px 1fr;
    grid-auto-rows: 19px;
    align-items: stretch;
    padding: 11px 8px 0;
  }

  .discount .total-rows {
    grid-template-columns: 51px 1fr;
    padding-left: 7px;
  }

  .total label {
    align-self: center;
    white-space: nowrap;
  }

  .tax {
    display: grid;
    grid-template-columns: 70fr 84fr;
    gap: 6px;
  }

  .normal .tax {
    grid-template-columns: 1fr 1fr;
  }
</style>
